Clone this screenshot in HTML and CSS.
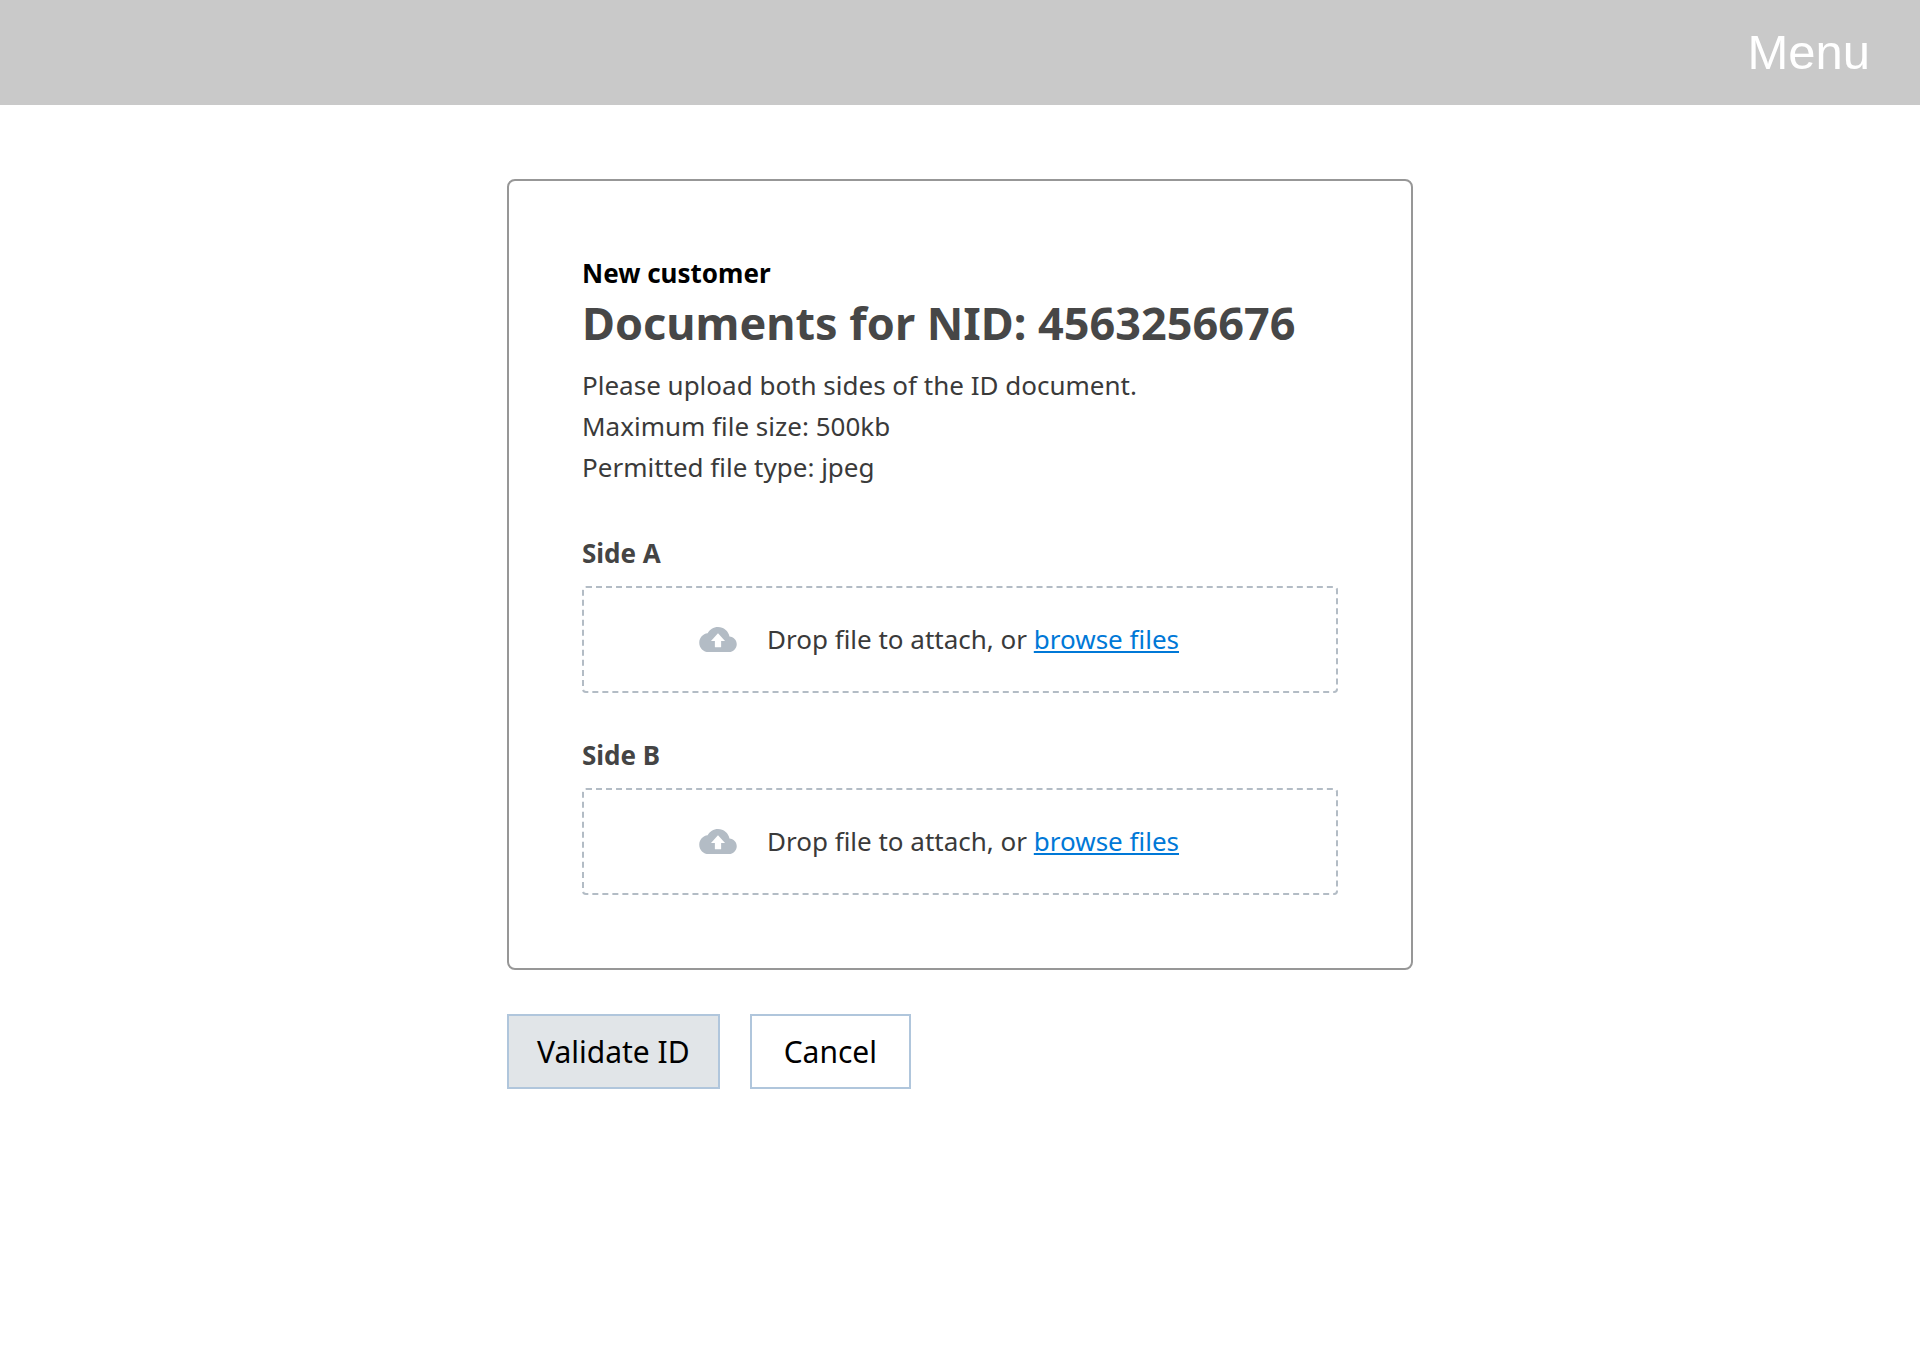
FILE: index.html
```html
<!DOCTYPE html>
<html lang="en">
<head>
    <meta charset="utf-8">
    <title>New customer - Documents</title>
    <link rel="stylesheet" href="styles.css">
</head>
<body>
    <header class="header">
        <a href="#" class="menu-link">Menu</a>
    </header>

    <main class="content">
        <div class="card">
            <p class="subtitle">New customer</p>
            <h1>Documents for NID: 4563256676</h1>
            <div class="info">
                <p>Please upload both sides of the ID document.</p>
                <p>Maximum file size: 500kb</p>
                <p>Permitted file type: jpeg</p>
            </div>

            <section class="upload">
                <h2>Side A</h2>
                <div class="drop-zone">
                    <svg class="cloud" viewBox="0 4 24 16" aria-hidden="true">
                        <path fill-rule="evenodd" d="M19.35 10.04C18.67 6.59 15.64 4 12 4 9.11 4 6.6 5.64 5.35 8.04 2.34 8.36 0 10.91 0 14c0 3.31 2.69 6 6 6h13c2.76 0 5-2.24 5-5 0-2.64-2.05-4.78-4.65-4.96zM14 13v4h-4v-4H7.5L12 8l4.5 5z"/>
                    </svg>
                    <p>Drop file to attach, or <a href="#">browse files</a></p>
                </div>
            </section>

            <section class="upload">
                <h2>Side B</h2>
                <div class="drop-zone">
                    <svg class="cloud" viewBox="0 4 24 16" aria-hidden="true">
                        <path fill-rule="evenodd" d="M19.35 10.04C18.67 6.59 15.64 4 12 4 9.11 4 6.6 5.64 5.35 8.04 2.34 8.36 0 10.91 0 14c0 3.31 2.69 6 6 6h13c2.76 0 5-2.24 5-5 0-2.64-2.05-4.78-4.65-4.96zM14 13v4h-4v-4H7.5L12 8l4.5 5z"/>
                    </svg>
                    <p>Drop file to attach, or <a href="#">browse files</a></p>
                </div>
            </section>
        </div>

        <div class="buttons">
            <button type="button" class="button button-primary">Validate ID</button>
            <button type="button" class="button">Cancel</button>
        </div>
    </main>
</body>
</html>
```
FILE: styles.css
```css
* {
    box-sizing: border-box;
}

body {
    margin: 0;
    background-color: white;
    color: #3a3a3a;
    font-family: "Noto Sans", sans-serif;
    font-size: 26px;
    line-height: 41px;
}

h1, h2, p {
    margin: 0;
}

.header {
    display: flex;
    justify-content: flex-end;
    align-items: center;
    padding: 24px 50px;
    background-color: #c9c9c9;
}

.menu-link {
    color: white;
    font-family: "Liberation Sans", Arial, sans-serif;
    font-size: 49px;
    line-height: 57px;
    text-decoration: none;
}

.content {
    max-width: 906px;
    margin: 74px auto;
}

.card {
    padding: 72px 73px 73px;
    border: 2px solid #979797;
    border-radius: 8px;
}

.subtitle {
    color: black;
    font-weight: bold;
}

h1 {
    color: #474747;
    font-size: 45px;
    line-height: 58px;
    margin-bottom: 13px;
}

.info {
    padding-bottom: 3px;
}

.upload {
    margin-top: 42px;
}

.upload h2 {
    color: #444;
    font-size: 26px;
    line-height: 41px;
    margin-bottom: 12px;
}

.drop-zone {
    display: flex;
    align-items: center;
    gap: 30px;
    padding: 31px 115px;
    border: 2px dashed #b3bcc5;
    border-radius: 4px;
}

.drop-zone a {
    color: #0078d7;
}

.cloud {
    width: 38px;
    height: 25px;
    fill: #b3bcc5;
}

.buttons {
    display: flex;
    gap: 30px;
    margin-top: 44px;
}

.button {
    padding: 15px 32px;
    border: 2px solid #b0c6dc;
    background-color: white;
    color: black;
    font-family: inherit;
    font-size: 30px;
    line-height: 41px;
    cursor: pointer;
}

.button-primary {
    padding: 15px 28px;
    background-color: #e1e5e8;
}
```
